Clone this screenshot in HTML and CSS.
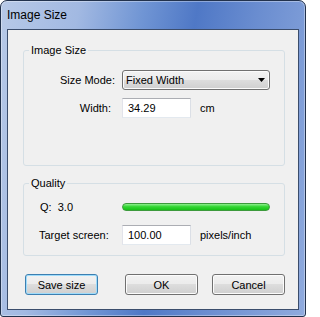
FILE: index.html
```html
<!DOCTYPE html>
<html>
<head>
<meta charset="utf-8">
<link rel="stylesheet" href="styles.css">
</head>
<body>
<div class="window">
  <div class="titlebar">Image Size</div>
  <div class="client">
    <fieldset class="group group-size">
      <legend>Image Size</legend>
      <div class="form">
        <div class="label">Size Mode:</div>
        <div class="field">
          <div class="select">
            <span>Fixed Width</span>
            <svg class="arrow" width="7" height="4" viewBox="0 0 7 4"><polygon points="0,0 7,0 3.5,4" fill="#000"/></svg>
          </div>
        </div>
        <div class="label label-width">Width:</div>
        <div class="field">
          <div class="input">34.29</div>
          <span class="unit">cm</span>
        </div>
      </div>
    </fieldset>
    <fieldset class="group group-quality">
      <legend>Quality</legend>
      <div class="form">
        <div class="label label-left q">Q:  3.0</div>
        <div class="field">
          <div class="bar"></div>
        </div>
        <div class="label label-left">Target screen:</div>
        <div class="field">
          <div class="input">100.00</div>
          <span class="unit">pixels/inch</span>
        </div>
      </div>
    </fieldset>
    <div class="buttons">
      <div class="button default">Save size</div>
      <div class="button-group">
        <div class="button">OK</div>
        <div class="button">Cancel</div>
      </div>
    </div>
  </div>
</div>
</body>
</html>
```
FILE: styles.css
```css
html, body {
  margin: 0;
  padding: 0;
  background: #ffffff;
}
body {
  font-family: "Liberation Sans", Arial, sans-serif;
  font-size: 11px;
  color: #000;
}
.window {
  width: 306px;
  height: 317px;
  box-sizing: border-box;
  border: 1px solid #22324d;
  border-radius: 7px 7px 3px 3px;
  background: linear-gradient(100deg, #b7c9e7 0%, #a2b9e2 22%, #7095d4 40%, #4f78c6 55%, #6a8dd0 72%, #90abde 100%);
  box-shadow: inset 0 0 0 1px rgba(255,255,255,0.35);
  padding: 0 6px 6px 6px;
  display: flex;
  flex-direction: column;
}
.titlebar {
  height: 28px;
  display: flex;
  align-items: center;
  padding-left: 0;
  font-size: 12px;
  color: #000;
}
.client {
  flex: 1;
  background: #f0f0f0;
  border: 1px solid #3b4d6c;
  display: flex;
  flex-direction: column;
}
.group {
  border: 1px solid #d5dfe5;
  border-radius: 3px;
  margin: 0 13px 0 15px;
  padding: 0;
  min-width: 0;
}
.group legend {
  margin-left: 5px;
  padding: 0 2px;
  line-height: 13px;
  font-size: 11px;
}
.group-size {
  margin-top: 14px;
  padding-top: 13px;
  padding-bottom: 47px;
}
.group-quality {
  margin-top: 11px;
  padding-top: 7px;
  padding-bottom: 10px;
}
.form {
  display: grid;
  grid-template-columns: 91px 1fr;
  column-gap: 7px;
  row-gap: 8px;
  align-items: center;
}
.label {
  text-align: right;
  white-space: pre;
}
.label-width {
  padding-right: 4px;
}
.label-left {
  text-align: left;
  padding-left: 15px;
}
.q {
  padding-left: 16px;
}
.field {
  display: flex;
  align-items: center;
  height: 20px;
}
.select {
  width: 148px;
  height: 20px;
  box-sizing: border-box;
  border: 1px solid #707070;
  border-radius: 3px;
  background: linear-gradient(#f2f2f2 0%, #ebebeb 50%, #dddddd 50%, #cfcfcf 100%);
  box-shadow: inset 0 0 0 1px #fbfbfb;
  display: flex;
  align-items: center;
  justify-content: space-between;
  padding: 0 4px 0 3px;
}
.arrow {
  display: block;
}
.input {
  width: 69px;
  height: 20px;
  box-sizing: border-box;
  background: #fff;
  border: 1px solid;
  border-color: #abadb3 #dbdfe6 #e3e9ef #e2e3ea;
  padding-left: 5px;
  display: flex;
  align-items: center;
}
.unit {
  margin-left: 9px;
}
.bar {
  width: 148px;
  height: 8px;
  box-sizing: border-box;
  border: 1px solid #3c9a3c;
  border-radius: 4px;
  background: linear-gradient(#8ef08e 0%, #33d633 45%, #16c216 100%);
}
.buttons {
  margin: 18px 13px 0 17px;
  display: flex;
  justify-content: space-between;
}
.button-group {
  display: flex;
  gap: 14px;
}
.button {
  width: 73px;
  height: 21px;
  box-sizing: border-box;
  border: 1px solid #707070;
  border-radius: 3px;
  background: linear-gradient(#f2f2f2 0%, #ebebeb 50%, #dddddd 50%, #cfcfcf 100%);
  box-shadow: inset 0 0 0 1px #fcfcfc;
  display: flex;
  align-items: center;
  justify-content: center;
}
.button.default {
  border-color: #3c7fb1;
  box-shadow: inset 0 0 0 1px #9fdcfb;
}
```
